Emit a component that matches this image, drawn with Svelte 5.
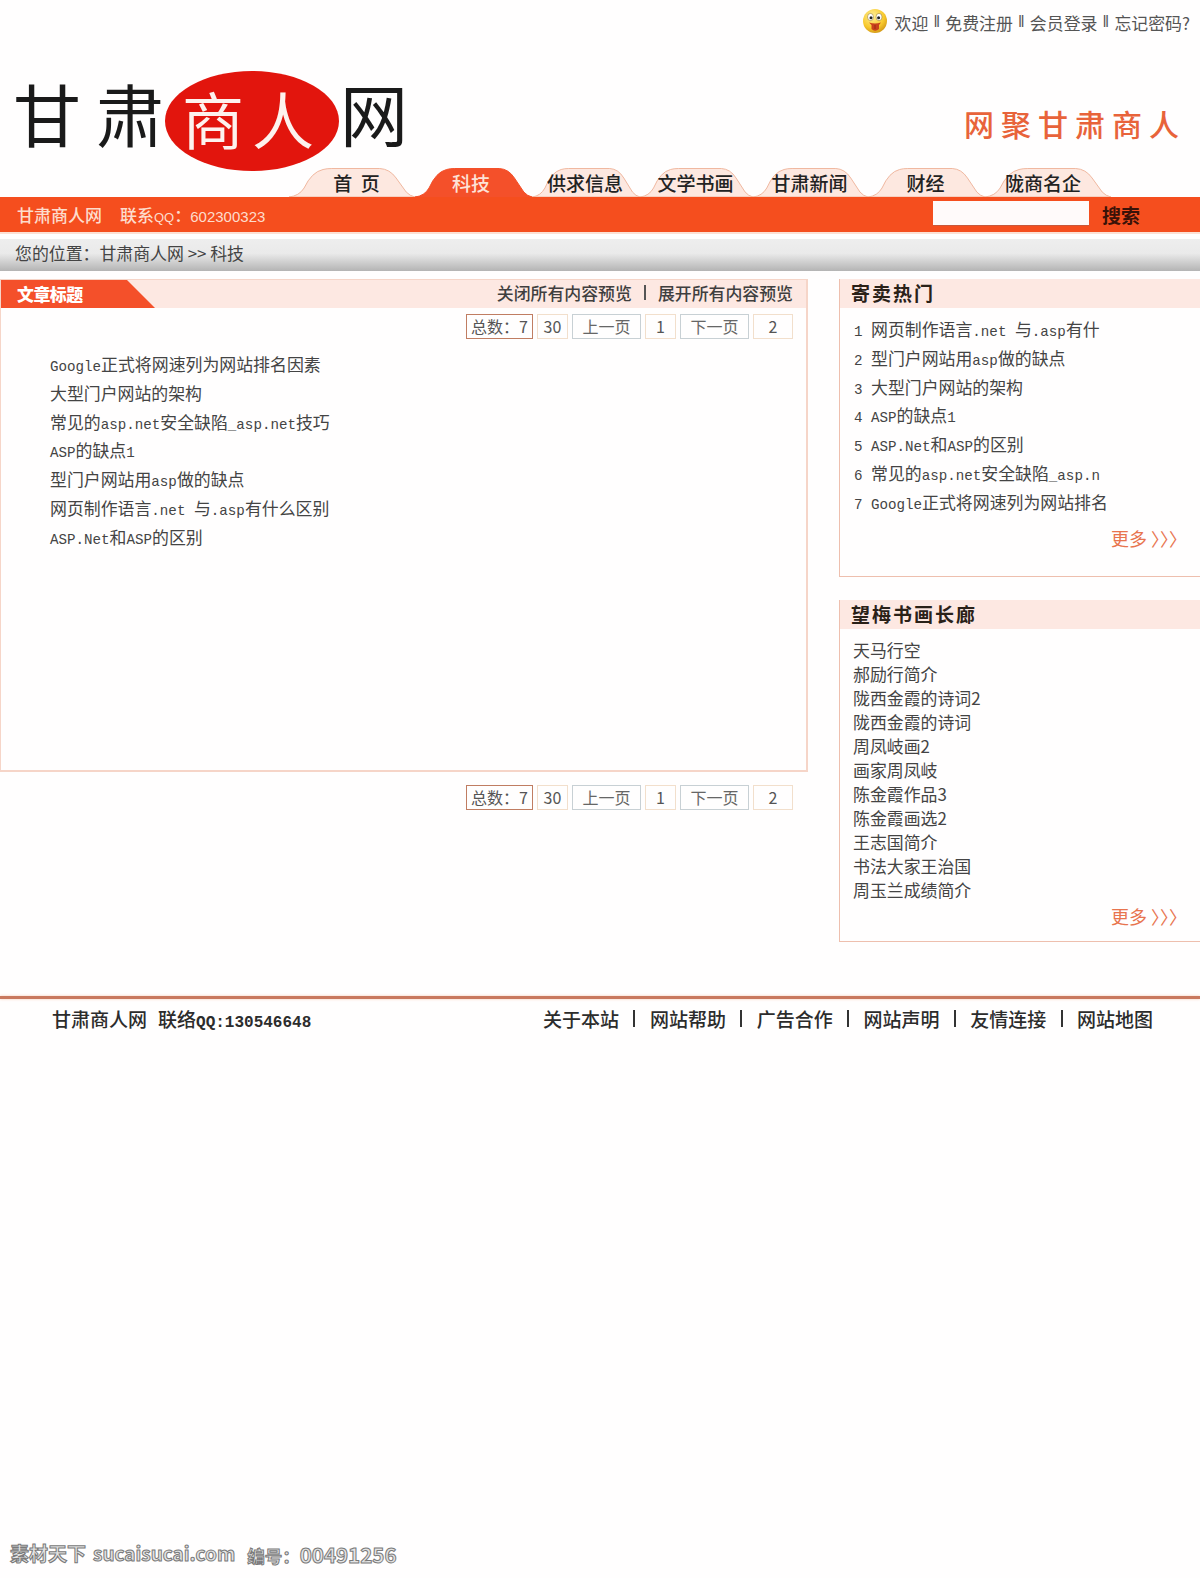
<script>
	const tabs = [
		{ label: '首  页', width: 126, shift: 9 },
		{ label: '科技', width: 117, active: true, shift: -5 },
		{ label: '供求信息', width: 108, shift: -2 },
		{ label: '文学书画', width: 113, shift: -2 },
		{ label: '甘肃新闻', width: 115, shift: -2 },
		{ label: '财经', width: 117, shift: -2 },
		{ label: '陇商名企', width: 126, shift: -10 }
	];

	const articles = [
		'Google正式将网速列为网站排名因素',
		'大型门户网站的架构',
		'常见的asp.net安全缺陷_asp.net技巧',
		'ASP的缺点1',
		'型门户网站用asp做的缺点',
		'网页制作语言.net 与.asp有什么区别',
		'ASP.Net和ASP的区别'
	];

	const hot = [
		'网页制作语言.net 与.asp有什',
		'型门户网站用asp做的缺点',
		'大型门户网站的架构',
		'ASP的缺点1',
		'ASP.Net和ASP的区别',
		'常见的asp.net安全缺陷_asp.n',
		'Google正式将网速列为网站排名'
	];

	const gallery = [
		'天马行空',
		'郝励行简介',
		'陇西金霞的诗词2',
		'陇西金霞的诗词',
		'周凤岐画2',
		'画家周凤岐',
		'陈金霞作品3',
		'陈金霞画选2',
		'王志国简介',
		'书法大家王治国',
		'周玉兰成绩简介'
	];

	const topLinks = ['欢迎', '免费注册', '会员登录', '忘记密码?'];
	const footerLinks = ['关于本站', '网站帮助', '广告合作', '网站声明', '友情连接', '网站地图'];

	// latin runs get their own size so they stay half the width of a CJK glyph
	function runs(text) {
		return text.match(/[\x00-\x7f]+|[^\x00-\x7f]+/g).map((part) => ({
			text: part,
			latin: part.charCodeAt(0) < 128
		}));
	}
</script>

{#snippet mixed(text)}
	{#each runs(text) as run}
		{#if run.latin}<span class="latin">{run.text}</span>{:else}{run.text}{/if}
	{/each}
{/snippet}

{#snippet pager()}
	<div class="pager">
		<span class="page total">总数：7</span>
		<span class="page num">30</span>
		<span class="page step">上一页</span>
		<span class="page num">1</span>
		<span class="page step">下一页</span>
		<span class="page last">2</span>
	</div>
{/snippet}

<div class="page-wrap">
	<header>
		<div class="top-links">
			<svg class="smiley" width="26" height="26" viewBox="0 0 26 26">
				<defs>
					<radialGradient id="face" cx="0.4" cy="0.3" r="0.8">
						<stop offset="0" stop-color="#fff09a" />
						<stop offset="0.6" stop-color="#f8c92c" />
						<stop offset="1" stop-color="#c98a10" />
					</radialGradient>
				</defs>
				<circle cx="13" cy="13" r="12" fill="url(#face)" />
				<ellipse cx="8.5" cy="9" rx="3" ry="3.6" fill="#fff" stroke="#8a6a20" stroke-width="0.5" />
				<ellipse cx="17" cy="9" rx="3" ry="3.6" fill="#fff" stroke="#8a6a20" stroke-width="0.5" />
				<circle cx="9" cy="9.8" r="1.5" fill="#222" />
				<circle cx="16.6" cy="9.8" r="1.5" fill="#222" />
				<path d="M7 14.5 Q13 16.5 19 14.5 L17 17 L17 21 Q13 24.5 9.5 21 L9.5 17 Z" fill="#c8401c" />
				<path d="M13 17 V21" stroke="#8c2410" stroke-width="0.8" />
			</svg>
			<div class="top-items">
				{#each topLinks as link, i}
					{#if i > 0}<span class="sep">‖</span>{/if}
					<span>{link}</span>
				{/each}
			</div>
		</div>

		<div class="brand-row">
			<div class="logo">
				<span class="logo-left">甘肃</span>
				<span class="logo-seal">商人</span>
				<span class="logo-right">网</span>
			</div>
			<div class="tagline">网聚甘肃商人</div>
		</div>

		<nav class="tabs">
			{#each tabs as tab}
				<div class="tab" class:active={tab.active} style="width: {tab.width}px">
					<svg class="tab-shape" viewBox="0 0 100 29" preserveAspectRatio="none">
						<path d="M0 29 Q8 28 12 20 Q18 4 27 1.5 Q30 0.5 34 0.5 L72 0.5 Q80 1 85 10 L93 24 Q96 28 100 29 Z" />
					</svg>
					<span class="tab-label" style="margin-left: {tab.shift}px">{tab.label}</span>
				</div>
			{/each}
		</nav>

		<div class="bar">
			<div class="bar-info">
				<span>甘肃商人网</span>
				<span>联系<span class="qq">QQ</span><span class="colon">：</span><span class="qq-num">602300323</span></span>
			</div>
			<div class="search">
				<input type="text" aria-label="搜索" />
				<span class="search-btn">搜索</span>
			</div>
		</div>

		<div class="crumb">您的位置：甘肃商人网 &gt;&gt; 科技</div>
	</header>

	<main>
		<section class="content">
			<div class="panel">
				<div class="panel-head">
					<div class="panel-title">文章标题</div>
					<div class="panel-actions">
						<span>关闭所有内容预览</span>
						<i></i>
						<span>展开所有内容预览</span>
					</div>
				</div>
				{@render pager()}
				<ul class="articles">
					{#each articles as item}
						<li>{@render mixed(item)}</li>
					{/each}
				</ul>
			</div>
			{@render pager()}
		</section>

		<aside>
			<div class="side-box hot-box">
				<h3>寄卖热门</h3>
				<ol class="hot">
					{#each hot as item, i}
						<li><span class="latin rank">{i + 1}</span>{@render mixed(item)}</li>
					{/each}
				</ol>
				<div class="more">更多 〉〉〉</div>
			</div>

			<div class="side-box gallery-box">
				<h3>望梅书画长廊</h3>
				<ul class="gallery">
					{#each gallery as item}
						<li>{item}</li>
					{/each}
				</ul>
				<div class="more">更多 〉〉〉</div>
			</div>
		</aside>
	</main>

	<footer>
		<div class="footer-line"></div>
		<div class="footer-row">
			<div class="footer-info">
				<span>甘肃商人网</span>
				<span>联络<span class="footer-qq">QQ:130546648</span></span>
			</div>
			<div class="footer-links">
				{#each footerLinks as link, i}
					{#if i > 0}<i></i>{/if}
					<span>{link}</span>
				{/each}
			</div>
		</div>
	</footer>

	<div class="watermark">
		<span>素材天下</span>
		<span>sucaisucai.com</span>
		<span class="mark-id"><span class="mark-label">编号：</span>00491256</span>
	</div>
</div>

<style>
	:global(body) {
		margin: 0;
		background: #fffefe;
	}

	.page-wrap {
		width: 1200px;
		height: 1578px;
		position: relative;
		overflow: hidden;
		font-family: 'Noto Sans CJK SC', 'Liberation Sans', sans-serif;
		font-size: 16.9px;
		color: #444;
	}

	.latin {
		font-family: 'Liberation Mono', monospace;
		font-size: 14.2px;
	}

	.top-links {
		height: 44px;
		display: flex;
		justify-content: flex-end;
		align-items: center;
		padding-right: 10px;
		gap: 7px;
		box-sizing: border-box;
		color: #555;
	}

	.top-items {
		display: flex;
		align-items: center;
	}

	.sep {
		width: 17px;
		text-align: center;
		font-family: 'Liberation Sans', sans-serif;
		font-size: 16px;
		color: #555;
	}

	.smiley {
		flex-shrink: 0;
		margin-bottom: 2px;
	}

	.brand-row {
		height: 124px;
		display: flex;
		justify-content: space-between;
		align-items: flex-start;
	}

	.logo {
		display: flex;
		align-items: center;
		margin: 26px 0 0 13px;
		height: 101px;
		font-size: 68px;
		line-height: 1;
		color: #1a1a1a;
	}

	.logo-left {
		letter-spacing: 15px;
		margin-right: -15px;
		padding-bottom: 16px;
	}

	.logo-seal {
		width: 174px;
		height: 100px;
		margin: 0 1px;
		border-radius: 50%;
		background: #e2150d;
		color: #fdf2ee;
		display: flex;
		align-items: center;
		justify-content: center;
		letter-spacing: 8px;
		font-size: 62px;
		padding-bottom: 6px;
		box-sizing: border-box;
	}

	.logo-right {
		padding-bottom: 16px;
	}

	.tagline {
		margin: 55px 14px 0 0;
		font-size: 30px;
		letter-spacing: 7px;
		line-height: 48px;
		color: #e8633a;
		font-weight: 500;
	}

	.tabs {
		height: 29px;
		display: flex;
		padding-left: 289px;
	}

	.tab {
		position: relative;
		height: 29px;
		flex-shrink: 0;
		display: flex;
		align-items: center;
		justify-content: center;
		font-size: 19px;
		font-weight: 500;
		color: #222;
	}

	.tab-shape {
		position: absolute;
		inset: 0;
		width: 100%;
		height: 100%;
	}

	.tab-shape path {
		fill: #fde8e0;
		stroke: #f0b8a0;
		stroke-width: 1;
		vector-effect: non-scaling-stroke;
	}

	.tab.active .tab-shape path {
		fill: #f4502a;
		stroke: #f4502a;
	}

	.tab.active {
		color: #fde3d8;
	}

	.tab-label {
		position: relative;
		line-height: 29px;
		white-space: pre;
	}

	.bar {
		height: 35px;
		background: #f54e1e;
		border-bottom: 2px solid #fce0d4;
		display: flex;
		justify-content: space-between;
		align-items: center;
	}

	.bar-info {
		display: flex;
		gap: 18px;
		padding-left: 17px;
		font-size: 17px;
		font-weight: 500;
		color: #fddccc;
	}

	.qq {
		font-family: 'Liberation Sans', sans-serif;
		font-size: 13px;
	}

	.colon {
		letter-spacing: -5px;
	}

	.qq-num {
		font-family: 'Liberation Sans', sans-serif;
		font-size: 15px;
		margin-left: 4px;
	}

	.search {
		display: flex;
		align-items: center;
		gap: 13px;
		padding-right: 60px;
	}

	.search input {
		width: 156px;
		height: 25px;
		border: none;
		border-bottom: 1px solid #c9573a;
		padding: 0;
		background: #fffafa;
		box-sizing: border-box;
		margin-top: -2px;
	}

	.search-btn {
		font-size: 19px;
		font-weight: 700;
		color: #3a1208;
	}

	.crumb {
		height: 32px;
		margin-top: 5px;
		padding-left: 15px;
		line-height: 28px;
		color: #444;
		background: linear-gradient(#eeeeee 0%, #eaeaea 45%, #b4b4b4 100%);
	}

	main {
		display: flex;
		justify-content: space-between;
		margin-top: 8px;
		height: 700px;
	}

	.content {
		width: 808px;
	}

	.panel {
		height: 493px;
		box-sizing: border-box;
		border: 2px solid #f6d5c8;
		border-left-width: 1px;
		border-top-width: 1px;
	}

	.panel-head {
		height: 28px;
		display: flex;
		justify-content: space-between;
		align-items: center;
		background: #fde8e2;
		padding-right: 13px;
	}

	.panel-title {
		width: 154px;
		height: 28px;
		line-height: 28px;
		box-sizing: border-box;
		padding-left: 16px;
		background: #f4502a;
		clip-path: polygon(0 0, 126px 0, 154px 100%, 0 100%);
		color: #fff;
		font-weight: 900;
		letter-spacing: -0.5px;
	}

	.panel-actions {
		display: flex;
		align-items: center;
		gap: 12px;
		padding-bottom: 3px;
		font-weight: 500;
		color: #3f3f3f;
	}

	.panel-actions i {
		width: 2px;
		height: 15px;
		background: #555;
	}

	.pager {
		display: flex;
		justify-content: flex-end;
		gap: 4px;
		padding-right: 15px;
		margin-top: 13px;
		font-size: 16px;
	}

	.panel .pager {
		margin-top: 6px;
		padding-right: 13px;
	}

	.page {
		height: 25px;
		line-height: 23px;
		box-sizing: border-box;
		border: 1px solid #f2dfcc;
		text-align: center;
		color: #555;
		flex-shrink: 0;
	}

	.total {
		width: 67px;
		border-color: #c07d62;
		border-width: 1.5px;
	}

	.num {
		width: 31px;
	}

	.step {
		width: 69px;
		border-color: #c8d0d4;
		color: #666;
	}

	.last {
		width: 40px;
	}

	.articles {
		list-style: none;
		margin: 0;
		padding: 11px 0 0 49px;
	}

	.articles li {
		height: 28.8px;
		line-height: 28.8px;
		white-space: nowrap;
	}

	aside {
		width: 361px;
		display: flex;
		flex-direction: column;
		gap: 23px;
	}

	.side-box {
		box-sizing: border-box;
		border: 1px solid #eebfae;
		border-top: none;
		border-right: none;
		position: relative;
	}

	.hot-box {
		height: 298px;
	}

	.gallery-box {
		height: 342px;
	}

	h3 {
		margin: 0;
		height: 29px;
		line-height: 27px;
		background: #fde8e2;
		padding-left: 11px;
		font-size: 19px;
		font-weight: 700;
		letter-spacing: 2px;
		color: #2a2118;
	}

	.hot {
		list-style: none;
		margin: 0;
		padding: 7px 0 0 14px;
	}

	.hot li {
		height: 28.8px;
		line-height: 28.8px;
		white-space: nowrap;
	}

	.rank {
		display: inline-block;
		width: 17px;
	}

	.gallery {
		list-style: none;
		margin: 0;
		padding: 9px 0 0 13px;
	}

	.gallery li {
		height: 24px;
		line-height: 24px;
	}

	.more {
		position: absolute;
		right: 13px;
		font-size: 18px;
		line-height: 24px;
		color: #e8744e;
		white-space: nowrap;
	}

	.hot-box .more {
		top: 247px;
	}

	.gallery-box .more {
		top: 304px;
	}

	footer {
		margin-top: 17px;
	}

	.footer-line {
		height: 3px;
		background: #c9795f;
		box-shadow: 0 0 3px #f6c8b4;
	}

	.footer-row {
		display: flex;
		justify-content: space-between;
		align-items: center;
		padding: 6px 47px 0 52px;
		font-size: 19px;
		font-weight: 500;
		color: #2c2c2c;
	}

	.footer-info {
		display: flex;
		gap: 11px;
	}

	.footer-qq {
		font-family: 'Liberation Mono', monospace;
		font-size: 16px;
		font-weight: 700;
	}

	.footer-links {
		display: flex;
		align-items: center;
		gap: 14.4px;
	}

	.footer-links i {
		width: 2px;
		height: 17px;
		background: #333;
	}

	.footer-links span {
		width: 76px;
		white-space: nowrap;
	}

	.watermark {
		position: absolute;
		left: 10px;
		top: 1539px;
		display: flex;
		gap: 7px;
		font-size: 19px;
		font-weight: 700;
		color: #e4e4e4;
		-webkit-text-stroke: 1px #7a7a7a;
		white-space: nowrap;
	}

	.mark-id {
		margin-left: 5px;
		font-size: 20.5px;
	}

	.mark-label {
		font-size: 17.5px;
	}
</style>
